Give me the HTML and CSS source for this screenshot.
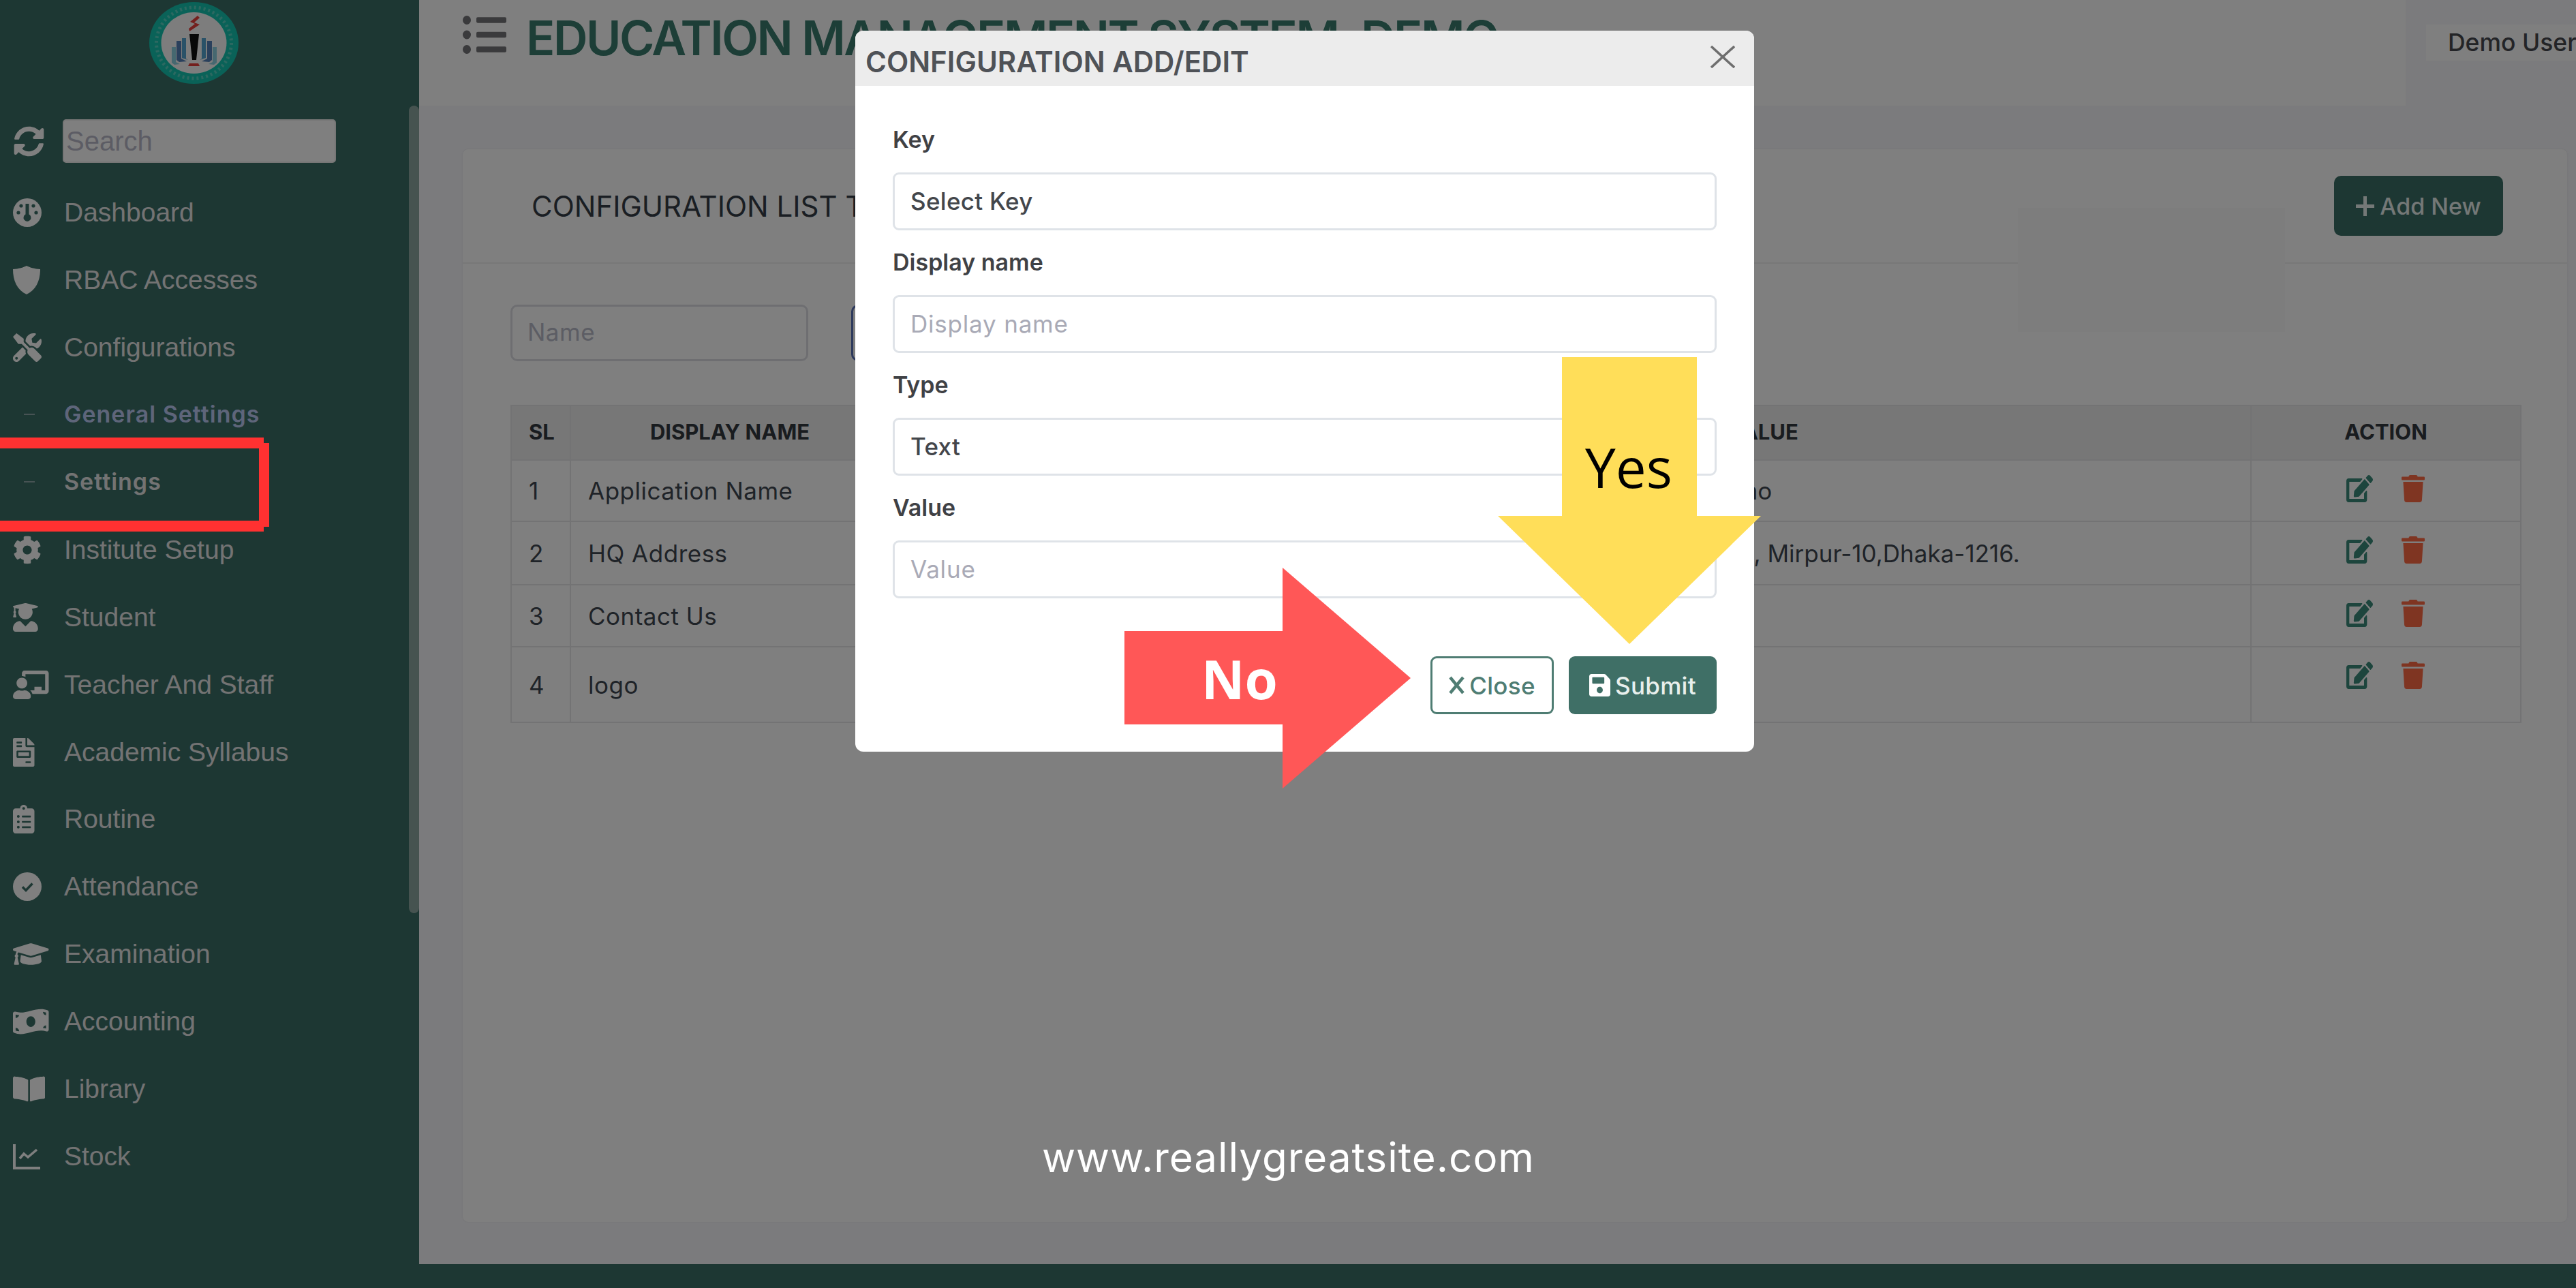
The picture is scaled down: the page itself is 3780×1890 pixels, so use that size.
FILE: index.html
```html
<!DOCTYPE html>
<html lang="en">
<head>
<meta charset="utf-8">
<title>Configuration</title>
<link rel="stylesheet" href="styles.css">
</head>
<body>
<svg class="defs" aria-hidden="true">
  <defs>
    <path id="edit" d="M402.6 83.2l90.2 90.2c3.8 3.8 3.8 10 0 13.8L274.4 405.6l-92.8 10.3c-12.4 1.4-22.9-9.1-21.5-21.5l10.3-92.8L388.8 83.2c3.8-3.8 10-3.8 13.8 0zm162-22.9l-48.8-48.8c-15.2-15.2-39.9-15.2-55.2 0l-35.4 35.4c-3.8 3.8-3.8 10 0 13.8l90.2 90.2c3.8 3.8 10 3.8 13.8 0l35.4-35.4c15.2-15.3 15.2-40 0-55.2zM384 346.2V448H64V128h229.8c3.2 0 6.2-1.3 8.5-3.5l40-40c7.6-7.6 2.2-20.5-8.5-20.5H48C21.5 64 0 85.5 0 112v352c0 26.5 21.5 48 48 48h352c26.5 0 48-21.5 48-48V306.2c0-10.7-12.9-16-20.5-8.5l-40 40c-2.2 2.3-3.5 5.3-3.5 8.5z"/>
    <path id="trash" d="M432 32H312l-9.4-18.7A24 24 0 0 0 281.1 0H166.8a23.72 23.72 0 0 0-21.4 13.3L136 32H16A16 16 0 0 0 0 48v32a16 16 0 0 0 16 16h416a16 16 0 0 0 16-16V48a16 16 0 0 0-16-16zM53.2 467a48 48 0 0 0 47.9 45h245.8a48 48 0 0 0 47.9-45L416 128H32z"/>
  </defs>
</svg>
<div class="app">
  <aside class="sidebar">
    <svg class="logo" viewBox="0 0 131 120" preserveAspectRatio="none">
      <ellipse cx="65.5" cy="60" rx="65.5" ry="60" fill="#14c4b0"/>
      <ellipse cx="65.5" cy="60" rx="55" ry="52" fill="none" stroke="#bfe8e0" stroke-width="5" stroke-dasharray="3 4" opacity=".4"/>
      <ellipse cx="65.500" cy="60" rx="48" ry="45" fill="#fafafa"/>
      <path d="M71 20 60 29l7 3-9 7 1 4 15-10-8-3 8-7z" fill="#e8403c"/>
      <path d="M59 47h14l-4 38h-6z" fill="#111"/>
      <path d="M59 90h13l2 4H57z" fill="#e8403c"/>
      <path d="M33 66h6v22l6 3-8 1-4-3z" fill="#8cd0e0"/>
      <path d="M40 57h7v26l8 4-11 1-4-3z" fill="#5580b8"/>
      <path d="M48 53h6v30l3 2-9-3z" fill="#55a5d0"/>
      <path d="M99 66h-6v22l-6 3 8 1 4-3z" fill="#8cd0e0"/>
      <path d="M92 57h-7v26l-8 4 11 1 4-3z" fill="#5580b8"/>
      <path d="M83 53h-6v30l-3 2 9-3z" fill="#55a5d0"/>
    </svg>
    <div class="search-row">
      <svg class="ico" viewBox="0 0 512 512"><path d="M370.72 133.28C339.458 104.008 298.888 87.962 255.848 88c-77.458.068-144.328 53.178-162.791 126.85-1.344 5.363-6.122 9.15-11.651 9.15H24.103c-7.498 0-13.194-6.807-11.807-14.176C33.933 94.924 134.813 8 256 8c66.448 0 126.791 26.136 171.315 68.685L463.03 40.97C478.149 25.851 504 36.559 504 57.941V192c0 13.255-10.745 24-24 24H345.941c-21.382 0-32.09-25.851-16.971-40.971l41.75-41.749zM32 296h134.059c21.382 0 32.09 25.851 16.971 40.971l-41.75 41.75c31.262 29.273 71.835 45.319 114.876 45.28 77.418-.07 144.315-53.144 162.787-126.849 1.344-5.363 6.122-9.15 11.651-9.15h57.304c7.498 0 13.194 6.807 11.807 14.176C478.067 417.076 377.187 504 256 504c-66.448 0-126.791-26.136-171.315-68.685L48.97 471.03C33.851 486.149 8 475.441 8 454.059V320c0-13.255 10.745-24 24-24z"/></svg>
      <div class="search">Search</div>
    </div>
    <nav class="nav">
      <div class="item"><span class="slot"><svg class="ico" viewBox="0 0 42 42"><circle cx="21" cy="21" r="21"/><g class="cut"><circle cx="8" cy="21" r="2.6"/><circle cx="34" cy="21" r="2.6"/><circle cx="12" cy="11" r="2.6"/><circle cx="30" cy="11" r="2.6"/><path d="M18.5 8h5v15.5a5.5 5.5 0 1 1-5 0z"/></g></svg></span>Dashboard</div>
      <div class="item"><span class="slot"><svg class="ico" viewBox="0 0 41 43"><path d="M20.5 0C24 2 33 5 41 5c0 17-6 31-20.500 38C6 36 0 22 0 5 8 5 17 2 20.500 0z"/></svg></span>RBAC Accesses</div>
      <div class="item"><span class="slot"><svg class="ico" viewBox="0 0 512 512"><path d="M501.1 395.7L384 278.6c-23.1-23.1-57.6-27.6-85.4-13.9L192 158.1V96L64 0 0 64l96 128h62.1l106.6 106.6c-13.6 27.8-9.2 62.3 13.9 85.4l117.1 117.1c14.6 14.6 38.2 14.6 52.7 0l52.7-52.7c14.5-14.6 14.5-38.2 0-52.7zM331.7 225c28.3 0 54.9 11 74.9 31l19.4 19.4c15.8-6.9 30.8-16.5 43.8-29.5 37.1-37.1 49.7-89.3 37.9-136.7-2.2-9-13.5-12.1-20.1-5.5l-74.4 74.4-67.9-11.3L334 98.9l74.4-74.4c6.6-6.6 3.4-17.9-5.7-20.2-47.4-11.7-99.6.9-136.6 37.9-28.5 28.5-41.9 66.1-41.2 103.6l82.1 82.1c8.1-1.9 16.5-2.9 24.7-2.9zm-103.9 82l-56.7-56.7L18.7 402.8c-25 25-25 65.5 0 90.5s65.5 25 90.5 0l123.6-123.6c-7.6-19.9-9.9-41.6-5-62.7zM64 472c-13.2 0-24-10.8-24-24 0-13.3 10.7-24 24-24s24 10.7 24 24c0 13.2-10.7 24-24 24z"/></svg></span>Configurations</div>
      <div class="item sub sub-muted"><span class="slot"><i class="dash"></i></span>General Settings</div>
      <div class="item sub"><span class="slot"><i class="dash"></i></span>Settings</div>
      <div class="item"><span class="slot"><svg class="ico" viewBox="0 0 512 512"><path d="M487.4 315.7l-42.6-24.6c4.3-23.2 4.3-47 0-70.2l42.6-24.6c4.9-2.8 7.1-8.6 5.5-14-11.1-35.6-30-67.8-54.7-94.6-3.8-4.1-10-5.1-14.8-2.3L380.8 110c-17.9-15.4-38.5-27.3-60.8-35.1V25.8c0-5.6-3.9-10.5-9.4-11.7-36.7-8.2-74.3-7.800-109.200 0-5.500 1.200-9.400 6.100-9.400 11.700V75c-22.200 7.900-42.800 19.800-60.800 35.100L88.700 85.500c-4.900-2.800-11-1.900-14.800 2.300-24.700 26.700-43.600 58.900-54.700 94.600-1.700 5.400.6 11.200 5.500 14L67.300 221c-4.300 23.200-4.300 47 0 70.200l-42.600 24.600c-4.900 2.800-7.100 8.600-5.500 14 11.100 35.600 30 67.800 54.700 94.600 3.800 4.100 10 5.100 14.800 2.300l42.600-24.600c17.900 15.400 38.500 27.300 60.800 35.100v49.200c0 5.600 3.900 10.500 9.400 11.700 36.700 8.200 74.300 7.800 109.200 0 5.500-1.200 9.400-6.100 9.400-11.700v-49.200c22.200-7.900 42.800-19.800 60.800-35.100l42.600 24.600c4.900 2.800 11 1.900 14.800-2.300 24.700-26.700 43.600-58.900 54.700-94.600 1.500-5.500-.7-11.300-5.600-14.100zM256 336c-44.100 0-80-35.900-80-80s35.900-80 80-80 80 35.900 80 80-35.900 80-80 80z"/></svg></span>Institute Setup</div>
      <div class="item"><span class="slot"><svg class="ico" viewBox="0 0 448 512"><path d="M319.4 320.6L224 416l-95.400-95.400C57.100 323.700 0 382.200 0 454.400v9.600c0 26.500 21.500 48 48 48h352c26.500 0 48-21.500 48-48v-9.600c0-72.200-57.100-130.700-128.600-133.800zM13.600 79.800l6.400 1.500v58.400c-7 4.200-12 11.500-12 20.300 0 8.400 4.600 15.400 11.100 19.700L3.500 242c-1.700 6.900 2.100 14 7.600 14h41.800c5.500 0 9.300-7.100 7.600-14l-15.600-62.300C51.400 175.400 56 168.400 56 160c0-8.800-5-16.100-12-20.300V87.100l66 15.900c-8.600 17.200-14 36.400-14 57 0 70.700 57.300 128 128 128s128-57.300 128-128c0-20.600-5.300-39.800-14-57l96.300-23.200c18.200-4.400 18.200-27.100 0-31.500l-190.400-46c-13-3.100-26.700-3.100-39.700 0L13.600 48.200c-18.100 4.400-18.100 27.200 0 31.600z"/></svg></span>Student</div>
      <div class="item"><span class="slot"><svg class="ico" viewBox="0 0 640 512"><path d="M208 352c-2.390 0-4.780.35-7.060 1.090C187.980 357.300 174.350 360 160 360c-14.350 0-27.980-2.700-40.950-6.910-2.280-.74-4.660-1.090-7.050-1.090C49.940 352-.33 402.480 0 464.62.14 490.880 21.730 512 48 512h224c26.270 0 47.860-21.120 48-47.38.33-62.140-49.940-112.620-112-112.620zm-48-32c53.020 0 96-42.980 96-96s-42.980-96-96-96-96 42.980-96 96 42.980 96 96 96zM592 0H208c-26.470 0-48 22.250-48 49.590V96c23.420 0 45.100 6.780 64 17.800V64h352v288h-64v-64H384v64h-76.240c19.100 16.690 33.120 38.730 39.690 64H592c26.470 0 48-22.250 48-49.590V49.590C640 22.250 618.470 0 592 0z"/></svg></span>Teacher And Staff</div>
      <div class="item"><span class="slot"><svg class="ico" viewBox="0 0 384 512"><path d="M288 256H96v64h192v-64zm89-151L279.100 7c-4.500-4.500-10.600-7-17-7H256v128h128v-6.100c0-6.300-2.500-12.400-7-16.900zm-153 31V0H24C10.700 0 0 10.700 0 24v464c0 13.300 10.700 24 24 24h336c13.300 0 24-10.700 24-24V160H248c-13.200 0-24-10.800-24-24zM64 72c0-4.420 3.580-8 8-8h80c4.420 0 8 3.580 8 8v16c0 4.420-3.580 8-8 8H72c-4.420 0-8-3.580-8-8V72zm0 64c0-4.420 3.580-8 8-8h80c4.420 0 8 3.580 8 8v16c0 4.420-3.580 8-8 8H72c-4.420 0-8-3.580-8-8v-16zm256 304c0 4.420-3.580 8-8 8h-80c-4.420 0-8-3.580-8-8v-16c0-4.420 3.580-8 8-8h80c4.420 0 8 3.580 8 8v16zm0-200v96c0 8.840-7.160 16-16 16H80c-8.840 0-16-7.160-16-16v-96c0-8.840 7.160-16 16-16h224c8.840 0 16 7.160 16 16z"/></svg></span>Academic Syllabus</div>
      <div class="item"><span class="slot"><svg class="ico" viewBox="0 0 384 512"><path d="M336 64h-80c0-35.300-28.700-64-64-64s-64 28.700-64 64H48C21.500 64 0 85.500 0 112v352c0 26.500 21.500 48 48 48h288c26.500 0 48-21.500 48-48V112c0-26.500-21.500-48-48-48zM96 424c-13.300 0-24-10.700-24-24s10.700-24 24-24 24 10.700 24 24-10.700 24-24 24zm0-96c-13.300 0-24-10.700-24-24s10.700-24 24-24 24 10.700 24 24-10.700 24-24 24zm0-96c-13.300 0-24-10.700-24-24s10.700-24 24-24 24 10.700 24 24-10.700 24-24 24zm96-192c13.300 0 24 10.700 24 24s-10.700 24-24 24-24-10.700-24-24 10.700-24 24-24zm128 368c0 4.400-3.600 8-8 8H168c-4.400 0-8-3.600-8-8v-16c0-4.400 3.600-8 8-8h144c4.400 0 8 3.600 8 8v16zm0-96c0 4.400-3.600 8-8 8H168c-4.400 0-8-3.600-8-8v-16c0-4.400 3.600-8 8-8h144c4.400 0 8 3.600 8 8v16zm0-96c0 4.400-3.600 8-8 8H168c-4.400 0-8-3.600-8-8v-16c0-4.400 3.600-8 8-8h144c4.400 0 8 3.600 8 8v16z"/></svg></span>Routine</div>
      <div class="item"><span class="slot"><svg class="ico" viewBox="0 0 42 42"><circle cx="21" cy="21" r="21"/><path class="tick" d="M14 21.500l5 5 9.500-10"/></svg></span>Attendance</div>
      <div class="item"><span class="slot"><svg class="ico" viewBox="0 0 640 512"><path d="M622.340 153.200L343.400 67.500c-15.200-4.670-31.600-4.670-46.790 0L17.660 153.200c-23.540 7.230-23.540 38.360 0 45.590l48.630 14.940c-10.670 13.190-17.230 29.280-17.880 46.900C38.780 266.150 32 276.110 32 288c0 10.780 5.680 19.850 13.860 25.650L20.330 428.530C18.110 438.520 25.710 448 35.940 448h56.110c10.240 0 17.840-9.480 15.620-19.470L82.140 313.650C90.320 307.850 96 298.780 96 288c0-11.570-6.470-21.250-15.660-26.870.76-15.020 8.440-28.300 20.690-36.720L296.600 284.500c9.060 2.780 26.440 6.250 46.790 0l278.950-85.700c23.550-7.240 23.550-38.360 0-45.600zM352.790 315.090c-28.530 8.760-52.840 3.920-65.590 0l-145.020-44.550L128 384c0 35.350 85.960 64 192 64s192-28.650 192-64l-14.180-113.470-145.030 44.560z"/></svg></span>Examination</div>
      <div class="item"><span class="slot"><svg class="ico" viewBox="0 0 640 512"><path d="M621.160 54.460C582.370 38.190 543.550 32 504.750 32c-123.170-.01-246.330 62.340-369.500 62.340-30.890 0-61.760-3.920-92.650-13.720-3.470-1.100-6.950-1.620-10.350-1.620C15.040 79 0 92.320 0 110.810v317.260c0 12.630 7.230 24.600 18.840 29.460C57.630 473.810 96.450 480 135.250 480c123.170 0 246.340-62.350 369.510-62.350 30.890 0 61.760 3.920 92.650 13.720 3.470 1.100 6.950 1.620 10.350 1.620 17.210 0 32.250-13.320 32.250-31.810V83.930c-.01-12.640-7.240-24.600-18.850-29.470zM48 132.220c20.120 5.040 41.120 7.570 62.720 8.930C104.840 170.540 79 192.690 48 192.690v-60.470zm0 285v-47.780c34.370 0 62.180 27.270 63.710 61.400-22.530-1.810-43.590-6.310-63.710-13.620zM320 352c-44.190 0-80-42.990-80-96 0-53.020 35.820-96 80-96s80 42.980 80 96c0 53.030-35.830 96-80 96zm272 27.780c-17.520-4.390-35.710-6.850-54.320-8.440 5.870-26.080 27.500-45.880 54.320-49.280v57.720zm0-236.110c-30.890-3.910-54.860-29.700-55.810-61.550 19.540 2.170 38.090 6.230 55.810 12.660v48.890z"/></svg></span>Accounting</div>
      <div class="item"><span class="slot"><svg class="ico" viewBox="0 0 576 512"><path d="M542.220 32.050c-54.800 3.110-163.720 14.430-230.960 55.590-4.640 2.840-7.270 7.890-7.270 13.170v363.870c0 11.550 12.630 18.850 23.280 13.490 69.180-34.820 169.230-44.320 218.700-46.920 16.890-.89 30.020-14.430 30.020-30.660V62.750c.01-17.710-15.350-31.740-33.770-30.700zM264.730 87.640C197.500 46.480 88.580 35.170 33.780 32.050 15.360 31.010 0 45.040 0 62.750V400.600c0 16.240 13.130 29.780 30.020 30.660 49.490 2.600 149.590 12.110 218.770 46.950 10.620 5.350 23.210-1.940 23.210-13.460V100.630c0-5.290-2.620-10.140-7.270-12.990z"/></svg></span>Library</div>
      <div class="item"><span class="slot"><svg class="ico" viewBox="0 0 42 42"><path class="chart" d="M2 3v35h38"/><path class="chart thin" d="M10 24l6-7 6 5 13-11"/></svg></span>Stock</div>
    </nav>
    <div class="scrollbar"></div>
  </aside>
  <main class="main">
    <header class="topbar">
      <div class="topbar-left">
        <svg class="burger" viewBox="0 48 512 416" preserveAspectRatio="none"><path d="M48 48a48 48 0 1 0 48 48 48 48 0 0 0-48-48zm0 160a48 48 0 1 0 48 48 48 48 0 0 0-48-48zm0 160a48 48 0 1 0 48 48 48 48 0 0 0-48-48zm448 16H176a16 16 0 0 0-16 16v32a16 16 0 0 0 16 16h320a16 16 0 0 0 16-16v-32a16 16 0 0 0-16-16zm0-320H176a16 16 0 0 0-16 16v32a16 16 0 0 0 16 16h320a16 16 0 0 0 16-16V80a16 16 0 0 0-16-16zm0 160H176a16 16 0 0 0-16 16v32a16 16 0 0 0 16 16h320a16 16 0 0 0 16-16v-32a16 16 0 0 0-16-16z"/></svg>
        <h1 class="app-title">EDUCATION MANAGEMENT SYSTEM, DEMO</h1>
      </div>
      <div class="user">Demo User</div>
    </header>
    <section class="card">
      <div class="card-head">
        <h2 class="card-title">CONFIGURATION LIST TABLE</h2>
        <div class="btn-add"><svg class="plus" viewBox="0 0 27 29"><path d="M13.500 0v29M0 14.500h27"/></svg>Add New</div>
      </div>
      <div class="card-body">
        <div class="filters">
          <div class="filter">Name</div>
          <div class="filter filter-focus"></div>
        </div>
        <table class="table">
          <colgroup><col class="c-sl"><col class="c-name"><col class="c-key"><col class="c-val"><col class="c-act"></colgroup>
          <thead><tr><th class="left">SL</th><th>DISPLAY NAME</th><th></th><th class="th-val">VALUE</th><th>ACTION</th></tr></thead>
          <tbody>
            <tr class="r1"><td>1</td><td class="pad">Application Name</td><td></td><td class="val">Demo</td><td class="act"><svg class="a-edit" viewBox="0 0 576 512" preserveAspectRatio="none"><use href="#edit"/></svg><svg class="a-del" viewBox="0 0 448 512" preserveAspectRatio="none"><use href="#trash"/></svg></td></tr>
            <tr class="r2"><td>2</td><td class="pad">HQ Address</td><td></td><td class="val">H-11, Mirpur-10,Dhaka-1216.</td><td class="act"><svg class="a-edit" viewBox="0 0 576 512" preserveAspectRatio="none"><use href="#edit"/></svg><svg class="a-del" viewBox="0 0 448 512" preserveAspectRatio="none"><use href="#trash"/></svg></td></tr>
            <tr class="r3"><td>3</td><td class="pad">Contact Us</td><td></td><td class="val"></td><td class="act"><svg class="a-edit" viewBox="0 0 576 512" preserveAspectRatio="none"><use href="#edit"/></svg><svg class="a-del" viewBox="0 0 448 512" preserveAspectRatio="none"><use href="#trash"/></svg></td></tr>
            <tr class="r4"><td>4</td><td class="pad">logo</td><td></td><td class="val"></td><td class="act"><svg class="a-edit" viewBox="0 0 576 512" preserveAspectRatio="none"><use href="#edit"/></svg><svg class="a-del" viewBox="0 0 448 512" preserveAspectRatio="none"><use href="#trash"/></svg></td></tr>
          </tbody>
        </table>
      </div>
      <div class="ghost"></div>
    </section>
  </main>
  <footer class="footer"></footer>
</div>

<div class="backdrop">
  <div class="modal">
    <div class="modal-head">
      <span class="modal-title">CONFIGURATION ADD/EDIT</span>
      <svg class="modal-x" viewBox="0 0 36 33"><path d="M1 1l34 31M35 1L1 32"/></svg>
    </div>
    <div class="modal-body">
      <div class="field"><div class="label">Key</div><div class="control">Select Key</div></div>
      <div class="field"><div class="label">Display name</div><div class="control ph">Display name</div></div>
      <div class="field"><div class="label">Type</div><div class="control">Text</div></div>
      <div class="field"><div class="label">Value</div><div class="control ph">Value</div></div>
      <div class="actions">
        <div class="btn btn-close"><svg class="b-x" viewBox="0 0 23 29"><path d="M2 3l19 23M21 3L2 26"/></svg>Close</div>
        <div class="btn btn-submit"><svg class="b-save" viewBox="0 32 448 448" preserveAspectRatio="none"><path d="M433.941 129.941l-83.882-83.882A48 48 0 0 0 316.118 32H48C21.490 32 0 53.490 0 80v352c0 26.510 21.490 48 48 48h352c26.510 0 48-21.490 48-48V163.882a48 48 0 0 0-14.059-33.941zM224 416c-35.346 0-64-28.654-64-64 0-35.346 28.654-64 64-64s64 28.654 64 64c0 35.346-28.654 64-64 64zm96-304.520V212c0 6.627-5.373 12-12 12H76c-6.627 0-12-5.373-12-12V108c0-6.627 5.373-12 12-12h228.520c3.183 0 6.235 1.264 8.485 3.515l3.480 3.480A11.996 11.996 0 0 1 320 111.480z"/></svg>Submit</div>
      </div>
    </div>
  </div>
</div>

<div class="annotations">
  <svg class="shapes" viewBox="0 0 3780 1890">
    <path class="red-box" d="M0 642H387V650H395V773H387V780H0V764H380V658H0z"/>
    <path class="arrow-no" d="M1650 926H1882V833L2070 995 1882 1157V1063H1650z"/>
    <path class="arrow-yes" d="M2292 524H2490V757H2584L2391 945 2198 757H2292z"/>
  </svg>
  <div class="tag tag-no">No</div>
  <div class="tag tag-yes">Yes</div>
  <div class="url">www.reallygreatsite.com</div>
</div>
</body>
</html>
```
FILE: styles.css
```css
* { box-sizing: border-box; }
html, body { margin: 0; padding: 0; }
body {
  width: 3780px;
  height: 1890px;
  overflow: hidden;
  position: relative;
  font-family: "Inter", "Liberation Sans", sans-serif;
  background: #f6f6fa;
}
.defs { position: absolute; width: 0; height: 0; }

.app {
  width: 3780px;
  height: 1890px;
  display: grid;
  grid-template-columns: 615px 1fr;
  grid-template-rows: 1855px 35px;
}

/* sidebar */
.sidebar {
  position: relative;
  background: #3b6e66;
  padding-top: 3px;
  display: flex;
  flex-direction: column;
  font-family: "Liberation Sans", Arial, sans-serif;
  color: #e6e6e6;
}
.logo { width: 131px; height: 120px; margin-left: 219px; flex: none; }
.search-row {
  display: flex;
  align-items: center;
  gap: 27px;
  margin-top: 52px;
  padding-left: 20px;
  height: 64px;
}
.search-row .ico { height: 45px; width: 45px; }
.search {
  width: 401px;
  height: 64px;
  background: #fff;
  border: 2px solid #ededed;
  border-radius: 5px;
  padding-left: 3px;
  display: flex;
  align-items: center;
  color: #b9b9c9;
  font-size: 40px;
}
.nav { margin-top: 24px; display: flex; flex-direction: column; }
.item {
  height: 98.9px;
  display: flex;
  align-items: center;
  padding-left: 19px;
  font-size: 39px;
  white-space: nowrap;
}
.slot { width: 75px; flex: none; display: flex; align-items: center; }
.ico { height: 42px; width: auto; fill: #fff; display: block; }
.cut { fill: #3b6e66; }
.tick { fill: none; stroke: #3b6e66; stroke-width: 3.500; }
.chart { fill: none; stroke: #fff; stroke-width: 4; }
.chart.thin { stroke-width: 3.500; }
.sub { font-family: "Inter", sans-serif; font-weight: 600; font-size: 34px; letter-spacing: 1px; padding-bottom: 3px; }
.sub-muted { color: #bccaf5; }
.dash { width: 16px; height: 2px; margin-left: 16px; background: #8fa6a8; display: block; }
.scrollbar {
  position: absolute;
  left: 600px;
  top: 155px;
  width: 15px;
  height: 1185px;
  border-radius: 8px;
  background: #8ca6a1;
}

/* main */
.main { display: flex; flex-direction: column; min-width: 0; }
.topbar { height: 155px; display: flex; flex: none; }
.topbar-left {
  width: 2915px;
  background: #fff;
  padding-left: 64px;
  padding-top: 23px;
  display: flex;
  align-items: flex-start;
  gap: 29px;
}
.burger { width: 64px; height: 56px; fill: #747478; flex: none; }
.app-title {
  margin: -10px 0 0;
  font-size: 70px;
  line-height: 85px;
  font-weight: 600;
  letter-spacing: -2.5px;
  color: #3a7d6f;
  white-space: nowrap;
}
.user {
  height: 53px;
  width: 220px;
  margin: 36px 0 0 30px;
  background: #fefefe;
  padding-left: 32px;
  line-height: 53px;
  font-size: 35.500px;
  font-weight: 500;
  color: #47494f;
  white-space: nowrap;
  overflow: hidden;
}
.card {
  position: relative;
  margin: 64px 13px 0 64px;
  height: 1574px;
  background: #fff;
  border-radius: 8px;
  box-shadow: 0 0 2px rgba(0,0,0,.1);
}
.card-head {
  height: 168px;
  border-bottom: 2px solid #f0f0f0;
  display: flex;
  align-items: center;
  justify-content: space-between;
  padding: 0 94px 0 101px;
}
.card-title { margin: 0; font-size: 42px; font-weight: 400; color: #343d47; white-space: nowrap; }
.btn-add {
  width: 248px;
  height: 88px;
  border-radius: 10px;
  background: #3b6e66;
  color: #e8f0ee;
  font-size: 34px;
  font-weight: 500;
  display: flex;
  align-items: center;
  justify-content: center;
  gap: 8px;
  white-space: nowrap;
}
.plus { width: 27px; height: 29px; fill: none; stroke: #e8f0ee; stroke-width: 5; flex: none; }
.card-body { padding: 60px 69px 0 70px; }
.filters { display: flex; gap: 63px; margin-bottom: 64px; }
.filter {
  width: 437px;
  height: 83px;
  border: 3px solid #dcdde3;
  border-radius: 10px;
  padding: 0 0 3px 22px;
  display: flex;
  align-items: center;
  font-size: 35px;
  letter-spacing: .5px;
  color: #b8bac8;
}
.filter-focus { border-color: #5a72b8; }
.ghost {
  position: absolute;
  left: 2282px;
  top: 86px;
  width: 392px;
  height: 182px;
  background: #fafafa;
}

/* table */
.table {
  width: 2949px;
  border-collapse: collapse;
  table-layout: fixed;
  font-size: 35px;
  letter-spacing: .5px;
  color: #3f4750;
}
.c-sl { width: 87px; }
.c-name { width: 468px; }
.c-key { width: 1176px; }
.c-val { width: 822px; }
.c-act { width: 396px; }
.table th, .table td { border: 2px solid #e6e6e8; padding: 0 0 0 25px; white-space: nowrap; }
.table th {
  height: 80px;
  background: #eeeeee;
  font-size: 31px;
  font-weight: 700;
  letter-spacing: 0;
  color: #33383f;
  text-align: center;
  padding: 0 0 3px;
}
.table th.left { text-align: left; padding-left: 25px; }
.table th.th-val { text-align: left; padding-left: 54px; }
.table td.pad { padding-left: 25px; }
.table td.val { padding-left: 21px; letter-spacing: 0; }
.r1 td { height: 90px; }
.r2 td { height: 93px; }
.r3 td { height: 91px; }
.r4 td { height: 111px; }
.table td.act { vertical-align: top; padding: 21px 0 0 139px; }
.a-edit { width: 39px; height: 40px; fill: #3a8a7a; }
.a-del { width: 34px; height: 40px; margin-left: 42px; fill: #ff6a45; }

.footer { grid-column: 1 / -1; background: #3b6e66; }

/* modal */
.backdrop {
  position: absolute;
  inset: 0;
  background: rgba(0,0,0,.5);
  display: flex;
  align-items: flex-start;
  padding: 45px 0 0 1255px;
}
.modal {
  width: 1319px;
  background: #fff;
  border-radius: 12px;
  overflow: hidden;
}
.modal-head {
  height: 81px;
  background: #ececec;
  display: flex;
  align-items: center;
  justify-content: space-between;
  padding: 0 28px 0 15px;
}
.modal-title { font-size: 42px; font-weight: 600; color: #4f5257; white-space: nowrap; margin-top: 10px; }
.modal-x { width: 36px; height: 33px; margin-top: -4px; fill: none; stroke: #6e6e6e; stroke-width: 3.500; }
.modal-body { padding: 55px 55px 55px 55px; display: flex; flex-direction: column; gap: 23px; }
.label { height: 50px; line-height: 48px; margin-bottom: 22px; font-size: 34px; font-weight: 600; color: #3f4145; white-space: nowrap; }
.control {
  height: 85px;
  border: 3px solid #dfe3e8;
  border-radius: 9px;
  padding-left: 23px;
  padding-bottom: 2px;
  display: flex;
  align-items: center;
  font-size: 35px;
  letter-spacing: .3px;
  font-weight: 500;
  color: #43464b;
}
.control.ph { color: #a9aab6; font-weight: 400; letter-spacing: .8px; }
.actions { display: flex; justify-content: flex-end; gap: 22px; margin-top: 62px; }
.btn {
  height: 85px;
  border-radius: 9px;
  display: flex;
  align-items: center;
  justify-content: center;
  gap: 7px;
  font-size: 35px;
  letter-spacing: .3px;
  font-weight: 500;
  white-space: nowrap;
}
.btn-close { width: 181px; border: 3px solid #4f7d73; color: #4f7d73; background: #fff; }
.btn-submit { width: 217px; background: #3f6f66; color: #e8efed; }
.b-x { width: 23px; height: 29px; fill: none; stroke: #4f7d73; stroke-width: 4.500; }
.b-save { width: 31px; height: 33px; fill: #fff; }

/* annotations pinned over the picture */
.annotations { position: absolute; inset: 0; pointer-events: none; }
.shapes { position: absolute; inset: 0; width: 3780px; height: 1890px; }
.red-box { fill: #ff3131; }
.arrow-no { fill: #ff5757; }
.arrow-yes { fill: #ffde59; }
.tag { position: absolute; font-family: "Open Sans", sans-serif; line-height: 1; white-space: nowrap; }
.tag-no { left: 1763px; top: 957px; font-size: 78px; font-weight: 700; color: #fff; }
.tag-yes { left: 2326px; top: 645px; font-size: 80px; color: #000; }
.url {
  position: absolute;
  left: 1529px;
  top: 1662px;
  font-size: 60px;
  letter-spacing: 1px;
  line-height: 72px;
  color: #fff;
  white-space: nowrap;
}
```
